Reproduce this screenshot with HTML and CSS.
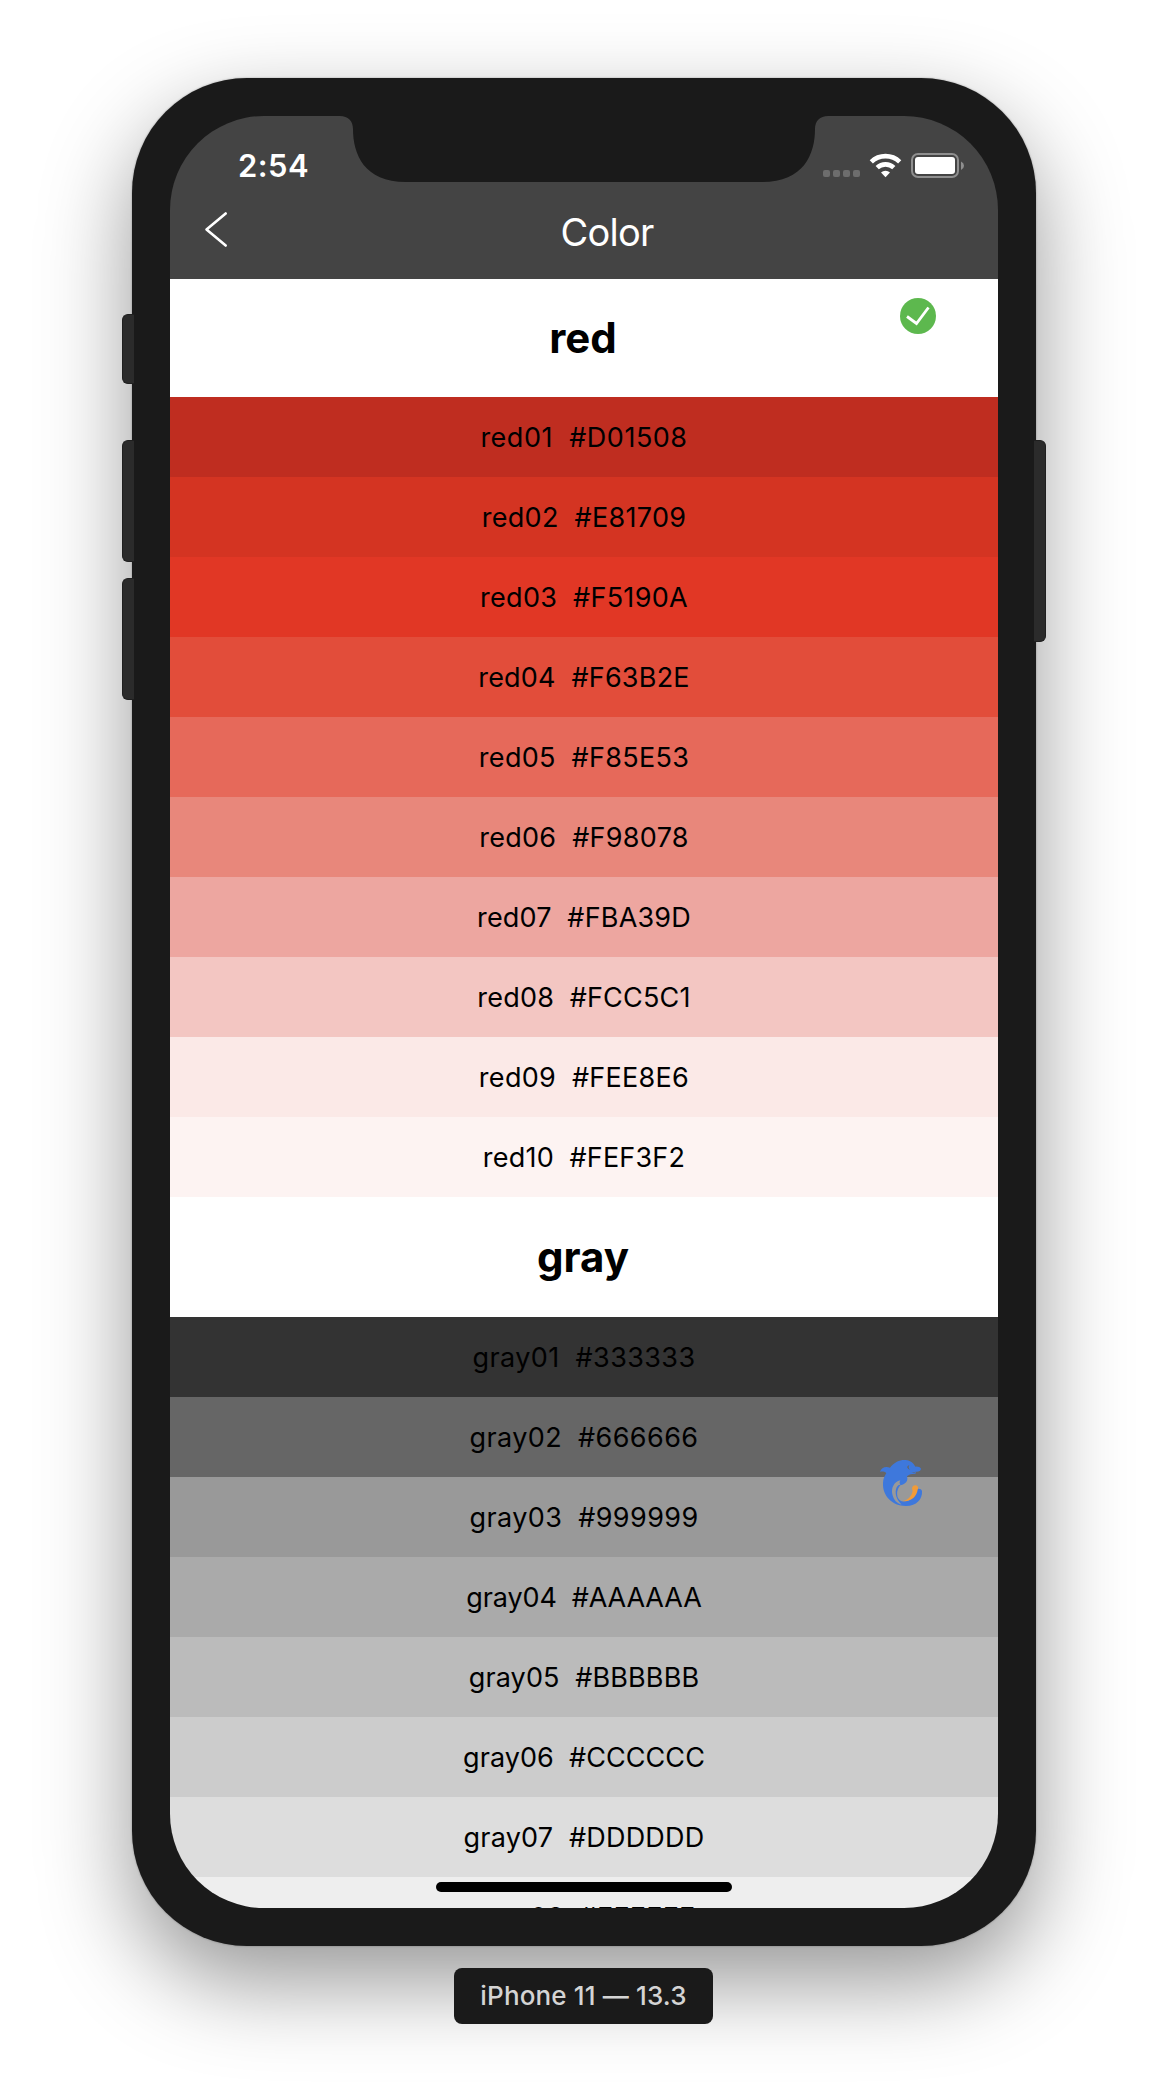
FILE: index.html
```html
<!DOCTYPE html>
<html lang="en">
<head>
<meta charset="utf-8">
<title>Color</title>
<link rel="stylesheet" href="styles.css">
</head>
<body>
<main class="stage">
  <div class="phone">
    <i class="key key-mute"></i><i class="key key-up"></i><i class="key key-down"></i><i class="key key-power"></i>
    <div class="screen">
      <header class="header">
        <div class="status">
          <span class="time">2:54</span>
          <svg class="signals" width="142" height="26" viewBox="0 0 142 26">
            <g fill="#6d6d6d"><rect x="0" y="17" width="7" height="7" rx="2"/><rect x="10" y="17" width="7" height="7" rx="2"/><rect x="20" y="17" width="7" height="7" rx="2"/><rect x="30" y="17" width="7" height="7" rx="2"/></g>
            <g fill="none" stroke="#fff" stroke-width="4.6"><path d="M48.300 8.800A20.500 20.500 0 0 1 76.700 8.800"/><path d="M54.200 14.700A12.100 12.100 0 0 1 70.800 14.700"/></g>
            <path d="M62.500 24.200L58 19.600A6.400 6.400 0 0 1 67 19.600Z" fill="#fff"/>
            <rect x="89" y="1" width="46" height="23" rx="6" fill="none" stroke="#8f8f8f" stroke-width="2"/>
            <rect x="92" y="4" width="40" height="17" rx="3" fill="#fff"/>
            <path d="M138 8.500Q141 10 141 12.700T138 17Z" fill="#8f8f8f"/>
          </svg>
        </div>
        <div class="nav">
          <svg class="back" width="26" height="38" viewBox="0 0 26 38" fill="none" stroke="#fff" stroke-width="2.600" stroke-linecap="round" stroke-linejoin="round"><path d="M22.700 2.500L3.500 18.500L22.700 34.500"/></svg>
          <h1 class="nav-title">Color</h1>
        </div>
        <svg class="notch" width="488" height="66" viewBox="0 0 488 66"><path d="M0 0C8 0 13 5 13 13C13 38 24 66 66 66H422C464 66 475 38 475 13C475 5 480 0 488 0Z" fill="#1a1a1a"/></svg>
      </header>
      <h2 class="group group-red">red</h2>
      <div class="row r1">red01&nbsp; #D01508</div>
      <div class="row r2">red02&nbsp; #E81709</div>
      <div class="row r3">red03&nbsp; #F5190A</div>
      <div class="row r4">red04&nbsp; #F63B2E</div>
      <div class="row r5">red05&nbsp; #F85E53</div>
      <div class="row r6">red06&nbsp; #F98078</div>
      <div class="row r7">red07&nbsp; #FBA39D</div>
      <div class="row r8">red08&nbsp; #FCC5C1</div>
      <div class="row r9">red09&nbsp; #FEE8E6</div>
      <div class="row r10">red10&nbsp; #FEF3F2</div>
      <h2 class="group group-gray">gray</h2>
      <div class="row g1">gray01&nbsp; #333333</div>
      <div class="row g2">gray02&nbsp; #666666</div>
      <div class="row g3">gray03&nbsp; #999999</div>
      <div class="row g4">gray04&nbsp; #AAAAAA</div>
      <div class="row g5">gray05&nbsp; #BBBBBB</div>
      <div class="row g6">gray06&nbsp; #CCCCCC</div>
      <div class="row g7">gray07&nbsp; #DDDDDD</div>
      <div class="row g8">gray08&nbsp; #EEEEEE</div>
      <svg class="check" width="40" height="40" viewBox="0 0 40 40"><circle cx="20" cy="20" r="18" fill="#5db84e"/><path d="M9 20.500L18.500 27.500L30.500 11.500" fill="none" stroke="#fff" stroke-width="2.800"/></svg>
      <svg class="dolphin" width="80" height="80" viewBox="0 0 240 240">
        <path d="M60 96C64 83 76 78 90 83C103 66 120 59 136 60C153 61 161 70 166 80C173 79 181 82 183 86C183 92 176 96 166 95C171 98 167 102 160 102C151 101 146 104 141 109C145 123 138 132 121 136C111 148 109 162 114 174C118 181 123 184 130 184C151 184 165 171 168 149C174 144 184 146 186 153C188 178 169 198 139 198C98 199 67 168 69 130C69 117 74 107 79 99C72 94 66 94 60 96Z" fill="#3e78dc"/>
        <path d="M121 121C101 126 93 145 97 163C101 181 111 190 125 194C108 179 103 158 110 142C113 136 116 134 121 134C118 130 118 126 121 121Z" fill="#999"/>
        <path d="M126 183C144 181 155 169 158 152C154 145 158 136 165 136C172 136 177 142 173 149C170 170 151 187 126 183Z" fill="#f19b38"/>
        <path d="M148 76C139 78 140 86 150 89C145 84 145 80 148 76Z" fill="#666"/>
        <path d="M154 96Q161 99 171 96Q161 103 154 96Z" fill="#666"/>
      </svg>
      <i class="home"></i>
    </div>
  </div>
  <div class="caption">iPhone 11 — 13.3</div>
</main>
</body>
</html>
```
FILE: styles.css
```css
* { box-sizing: border-box; }
body { margin: 0; background: #fff; font-family: Inter, sans-serif; color: #000; }
h1, h2 { margin: 0; }
svg { display: block; }
.stage { height: 2096px; padding-top: 78px; display: flex; flex-direction: column; align-items: center; overflow: hidden; }
.phone {
  position: relative; flex: none; width: 904px; height: 1868px; padding: 38px; border-radius: 115px; background: #1a1a1a;
  box-shadow: 0 0 2px rgba(0,0,0,.35), 0 36px 90px rgba(0,0,0,.41);
}
.key { position: absolute; width: 12px; background: #2b2b2b; border: 1px solid #1f1f1f; left: -10px; border-right: 0; border-radius: 6px 0 0 6px; }
.key-mute { top: 236px; height: 70px; }
.key-up { top: 362px; height: 122px; }
.key-down { top: 500px; height: 122px; }
.key-power { top: 362px; height: 202px; left: auto; right: -10px; border: 1px solid #1f1f1f; border-left: 0; border-radius: 0 6px 6px 0; }
.screen { position: relative; width: 828px; height: 1792px; border-radius: 94px; overflow: hidden; }
.header { position: relative; height: 163px; background: #444; color: #fff; }
.status { height: 82px; padding: 37px 33px 0 68px; display: flex; justify-content: space-between; }
.time { font-size: 31px; font-weight: 600; line-height: 26px; letter-spacing: .4px; }
.nav { height: 81px; display: grid; grid-template-columns: 92px 1fr 46px; align-items: start; }
.back { margin: 13px 0 0 33px; }
.nav-title { font-size: 38px; font-weight: 400; line-height: 46px; padding-top: 11px; text-align: center; letter-spacing: -.8px; }
.notch { position: absolute; left: 170px; top: 0; }
.group { display: flex; align-items: center; justify-content: center; font-size: 42px; font-weight: 700; background: #fff; padding: 0 2px 2px 0; }
.group-red { height: 118px; }
.group-gray { height: 120px; }
.row { height: 80px; line-height: 82px; text-align: center; font-size: 27px; letter-spacing: .3px; }
.r1 { background: #bf2d20; letter-spacing: .52px; }
.r2 { background: #d43422; }
.r3 { background: #e13725; }
.r4 { background: #e24d3a; letter-spacing: .22px; }
.r5 { background: #e6695a; }
.r6 { background: #e8877b; }
.r7 { background: #eda6a0; letter-spacing: .2px; }
.r8 { background: #f3c6c2; letter-spacing: .2px; }
.r9 { background: #fbe9e7; }
.r10 { background: #fdf3f2; letter-spacing: .2px; }
.g1 { background: #333; letter-spacing: .4px; }
.g2 { background: #666; letter-spacing: .4px; }
.g3 { background: #999; letter-spacing: .4px; }
.g4 { background: #aaa; letter-spacing: -.12px; }
.g5 { background: #bbb; letter-spacing: .15px; }
.g6 { background: #ccc; letter-spacing: .05px; }
.g7 { background: #ddd; letter-spacing: .22px; }
.g8 { background: #eee; letter-spacing: .2px; }
.check { position: absolute; left: 728px; top: 180px; }
.dolphin { position: absolute; left: 690px; top: 1324px; }
.home { position: absolute; left: 266px; top: 1766px; width: 296px; height: 10px; border-radius: 5px; background: #000; }
.caption { position: relative; flex: none; margin: 22px 1px 0 0; width: 259px; height: 56px; border-radius: 8px; background: #1a1a1a; color: #d4d4d4; font-size: 26px; font-weight: 500; line-height: 56px; text-align: center; letter-spacing: .15px; }
```
